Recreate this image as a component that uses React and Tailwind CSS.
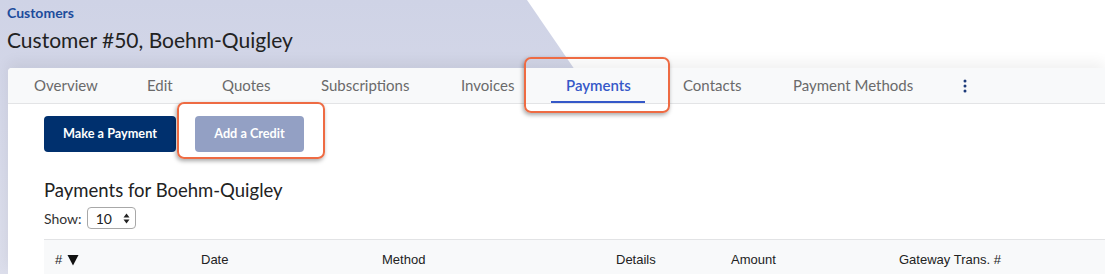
import React from "react";

const tabFont = { fontFamily: "Lato, 'Open Sans', sans-serif" };

const tabs = [
  { label: "Overview", w: "w-[113px]" },
  { label: "Edit", w: "w-[75px]" },
  { label: "Quotes", w: "w-[99px]" },
  { label: "Subscriptions", w: "w-[140px]" },
  { label: "Invoices", w: "w-[105px]" },
  { label: "Payments", w: "w-[117px]", active: true },
  { label: "Contacts", w: "w-[110px]" },
  { label: "Payment Methods", w: "w-[170px]" },
];

function Tab({ label, active, w }) {
  return (
    <div className={"relative h-full flex items-center pl-[26px] shrink-0 " + w}>
      <span className={active ? "text-[#3558c8] font-semibold" : "text-[#6a6a6a]"}>{label}</span>
      {active && <div className="absolute left-[11px] right-[12px] bottom-0 h-[2px] bg-[#3558c8]" />}
    </div>
  );
}

export default function App() {
  return (
    <div className="relative w-[1105px] h-[274px] overflow-hidden bg-white" style={tabFont}>
      <div className="absolute inset-0 bg-gradient-to-b from-[#cfd3e6] to-[#dcdeeb] [clip-path:polygon(0_0,527px_0,575px_70px,575px_100%,0_100%)]" />
      <div className="relative flex flex-col">
        <div className="pl-[7px] pt-[5px] h-[68px]">
          <div className="text-[14px] font-bold text-[#1d4c9c] leading-[16px]">Customers</div>
          <div className="mt-[6px] text-[21px] text-[#222] leading-[26px]">Customer #50, Boehm-Quigley</div>
        </div>
        <div className="ml-[8px] bg-white rounded-tl-[4px] shadow-[0_-6px_14px_rgba(0,0,0,0.06)] h-[206px]">
          <div className="h-[36px] bg-[#f8f9fa] border-b border-[#e3e4e6] rounded-tl-[4px] flex items-stretch text-[15px]">
            {tabs.map((t) => (
              <Tab key={t.label} {...t} />
            ))}
            <div className="flex items-center pl-[26px]">
              <svg width="4" height="14" viewBox="0 0 4 14">
                <circle cx="2" cy="2" r="1.5" fill="#1d3b7a" />
                <circle cx="2" cy="7" r="1.5" fill="#1d3b7a" />
                <circle cx="2" cy="12" r="1.5" fill="#1d3b7a" />
              </svg>
            </div>
          </div>
          <div className="pl-[36px]">
            <div className="flex gap-[19px] pt-[12px]">
              <button className="w-[132px] h-[36px] rounded-[4px] bg-[#00306e] text-white text-[12.7px] font-bold">Make a Payment</button>
              <button className="w-[109px] h-[36px] rounded-[4px] bg-[#93a0c4] text-white text-[12.7px] font-bold">Add a Credit</button>
            </div>
            <div className="mt-[27px] text-[18.5px] text-[#222] leading-[23px]">Payments for Boehm-Quigley</div>
            <div className="mt-[5px] flex items-center gap-[5px] text-[14px] text-[#333]">
              <span>Show:</span>
              <div className="w-[49px] h-[22px] border border-[#a8a8a8] rounded-[4px] flex items-center justify-between pl-[8px] pr-[5px] text-[#222]">
                <span>10</span>
                <svg width="7" height="11" viewBox="0 0 7 11">
                  <path d="M3.5 0.5 L6.5 4.5 L0.5 4.5 Z" fill="#222" />
                  <path d="M3.5 10.5 L6.5 6.5 L0.5 6.5 Z" fill="#222" />
                </svg>
              </div>
            </div>
            <div className="mt-[10px] border-t border-[#e2e3e5] bg-[#f8f9fa] h-[40px] grid grid-cols-[146px_181px_234px_115px_168px_1fr] items-center pl-[11px] text-[13px] text-[#222]" style={{ fontFamily: "'Liberation Sans', Arial, sans-serif" }}>
              <div className="flex items-center gap-[5px]">
                <span>#</span>
                <svg width="12" height="12" viewBox="0 0 12 12"><path d="M0.5 1 L11.5 1 L6 11.5 Z" fill="#111" /></svg>
              </div>
              <div>Date</div>
              <div>Method</div>
              <div>Details</div>
              <div>Amount</div>
              <div>Gateway Trans. #</div>
            </div>
          </div>
        </div>
      </div>
      <div className="absolute left-[524px] top-[57px] w-[146px] h-[56px] rounded-[7px] border-2 border-[#ee6b43] shadow-[-1px_2px_4px_rgba(0,0,0,0.35)]" />
      <div className="absolute left-[177px] top-[102px] w-[148px] h-[57px] rounded-[7px] border-2 border-[#ee6b43] shadow-[-1px_2px_4px_rgba(0,0,0,0.35)]" />
    </div>
  );
}
